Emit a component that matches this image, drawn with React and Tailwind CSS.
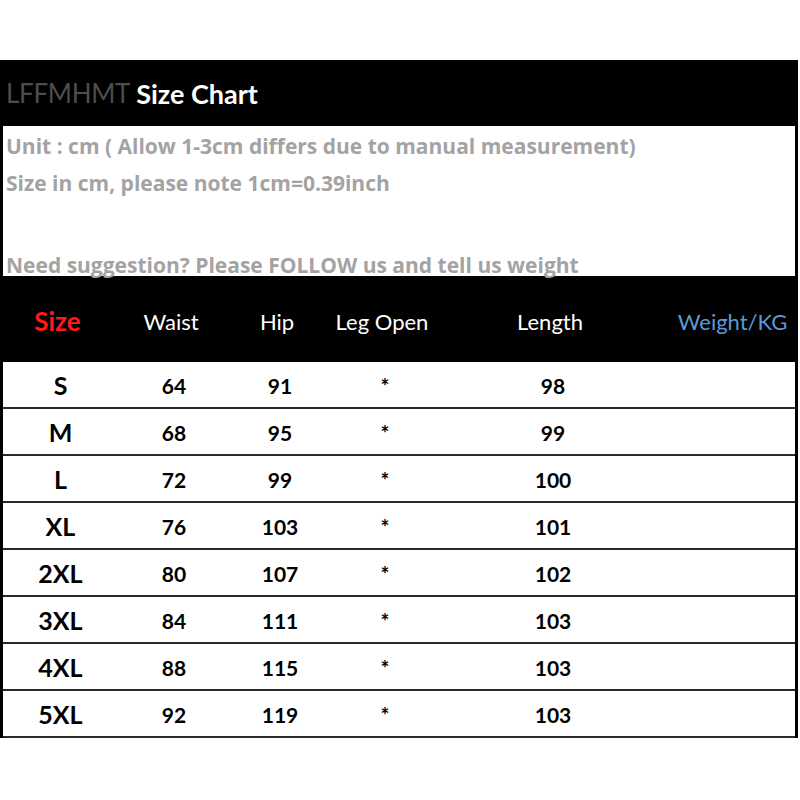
const rows = [
  ['S', '64', '91', '*', '98'],
  ['M', '68', '95', '*', '99'],
  ['L', '72', '99', '*', '100'],
  ['XL', '76', '103', '*', '101'],
  ['2XL', '80', '107', '*', '102'],
  ['3XL', '84', '111', '*', '103'],
  ['4XL', '88', '115', '*', '103'],
  ['5XL', '92', '119', '*', '103'],
];

const cols = 'grid grid-cols-[115px_112px_100px_110px_226px_131px]';

export default function App() {
  return (
    <div className="w-[800px] h-[800px] bg-white pt-[60px] font-['Lato',_'Open_Sans',_sans-serif]">
      <div className="w-[798px]">
        {/* title bar */}
        <div className="h-[66px] bg-black flex items-center pl-[6px] text-[26px] leading-none">
          <span className="text-[#4d4d4d] tracking-[-0.3px]">LFFMHMT</span>
          <span className="text-white font-bold text-[27px] ml-[6px]">Size Chart</span>
        </div>

        {/* notes */}
        <div className="h-[150px] bg-white border-x-[3px] border-black pl-[3px] text-[#a3a3a3] font-bold text-[21px] leading-[24px] font-['Open_Sans',_sans-serif]">
          <p className="pt-[8px]">Unit : cm ( Allow 1-3cm differs due to manual measurement)</p>
          <p className="mt-[13px]">Size in cm, please note 1cm=0.39inch</p>
          <p className="mt-[58px]">Need suggestion? Please FOLLOW us and tell us weight</p>
        </div>

        {/* column heads */}
        <div className={`${cols} h-[86px] bg-black items-center text-center text-white text-[22px] pt-[4px]`}>
          <span className="text-[#ff1a1a] font-bold text-[26px]">Size</span>
          <span>Waist</span>
          <span>Hip</span>
          <span>Leg Open</span>
          <span>Length</span>
          <span className="text-[#5b9bd5] pl-[8px]">Weight/KG</span>
        </div>

        {/* rows */}
        <div className="border-x-[3px] border-black">
          {rows.map((r) => (
            <div
              key={r[0]}
              className={`${cols} h-[47px] items-center text-center font-bold text-black border-b-2 border-[#2a2a2a] pt-[3px]`}
            >
              <span className="text-[25px]">{r[0]}</span>
              <span className="text-[21px]">{r[1]}</span>
              <span className="text-[21px]">{r[2]}</span>
              <span className="text-[21px]">{r[3]}</span>
              <span className="text-[21px]">{r[4]}</span>
              <span />
            </div>
          ))}
        </div>
      </div>
    </div>
  );
}
